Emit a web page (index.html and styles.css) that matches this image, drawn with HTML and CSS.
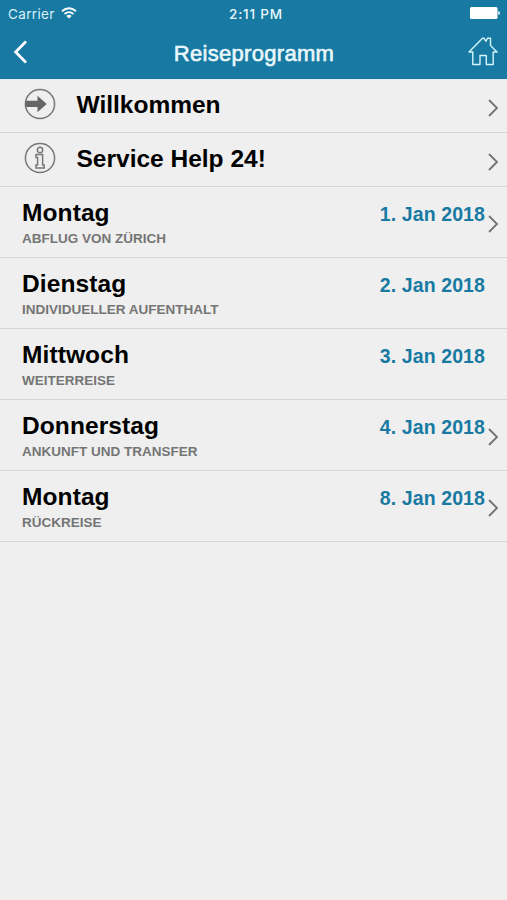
FILE: index.html
```
<!DOCTYPE html>
<html lang="de">
<head>
<meta charset="utf-8">
<title>Reiseprogramm</title>
<link rel="stylesheet" href="styles.css">
</head>
<body>
<header class="header">
  <div class="status">
    <div class="carrier"><span>Carrier</span>
      <svg class="wifi" width="16" height="12" viewBox="0 0 16 12" fill="none" stroke="currentColor" stroke-width="1.8"><path d="M1 4.2Q8-1.7 15 4.2M3.5 7Q8 3.2 12.5 7"/><path d="M8 11.5 5.3 8.9Q8 6.8 10.7 8.9Z" fill="currentColor" stroke="none"/></svg>
    </div>
    <span class="time">2:11 PM</span>
    <svg class="battery" width="30" height="12" viewBox="0 0 30 12" fill="currentColor"><rect width="27.5" height="12" rx="1.5"/><path d="M28.3 4q1.7 .5 1.7 2t-1.7 2z"/></svg>
  </div>
  <nav class="nav">
    <svg class="back" width="14" height="24" viewBox="0 0 14 24" fill="none" stroke="currentColor" stroke-width="2.7"><path d="M13 1.5 2.6 12 13 22.5"/></svg>
    <h1 class="title">Reiseprogramm</h1>
    <svg class="home" width="30" height="30" viewBox="0 0 30 30" fill="none" stroke="currentColor" stroke-width="1.4" stroke-linejoin="round"><path d="M1 16 14.5 2.2H16L18 5.3 19.5 2.2H22.5V9.5L29 16H25.2V28.5H18.3V19.5H12V28.5H4.8V16Z"/></svg>
  </nav>
</header>
<main class="list">
  <div class="row link">
    <svg class="icon" width="32" height="32" viewBox="0 0 32 32"><circle cx="16" cy="16" r="14.6" fill="none" stroke="#777" stroke-width="1.5"/><path d="M1.7 12.8H13.5V7.7L22.7 16 13.5 24.3V18.9H1.7Z" fill="#666"/></svg>
    <h2 class="name">Willkommen</h2>
    <svg class="chevron" width="11" height="18" viewBox="0 0 11 18"><path d="M1 1 9 9 1 17"/></svg>
  </div>
  <div class="row link">
    <svg class="icon" width="32" height="32" viewBox="0 0 32 32" fill="none" stroke="#777" stroke-width="1.5"><circle cx="16" cy="16" r="14.6"/><circle cx="16" cy="8" r="2.7"/><path d="M12 12.6H18.6V23H20.2V26H12V23H13.6V15.4H12Z"/></svg>
    <h2 class="name">Service Help 24!</h2>
    <svg class="chevron" width="11" height="18" viewBox="0 0 11 18"><path d="M1 1 9 9 1 17"/></svg>
  </div>
  <div class="row day"><div class="info"><h2 class="name">Montag</h2><p class="sub">ABFLUG VON ZÜRICH</p></div><time class="date">1. Jan 2018</time><svg class="chevron" width="11" height="18" viewBox="0 0 11 18"><path d="M1 1 9 9 1 17"/></svg></div>
  <div class="row day"><div class="info"><h2 class="name">Dienstag</h2><p class="sub">INDIVIDUELLER AUFENTHALT</p></div><time class="date">2. Jan 2018</time></div>
  <div class="row day"><div class="info"><h2 class="name">Mittwoch</h2><p class="sub">WEITERREISE</p></div><time class="date">3. Jan 2018</time></div>
  <div class="row day"><div class="info"><h2 class="name">Donnerstag</h2><p class="sub">ANKUNFT UND TRANSFER</p></div><time class="date">4. Jan 2018</time><svg class="chevron" width="11" height="18" viewBox="0 0 11 18"><path d="M1 1 9 9 1 17"/></svg></div>
  <div class="row day"><div class="info"><h2 class="name">Montag</h2><p class="sub">RÜCKREISE</p></div><time class="date">8. Jan 2018</time><svg class="chevron" width="11" height="18" viewBox="0 0 11 18"><path d="M1 1 9 9 1 17"/></svg></div>
</main>
</body>
</html>
```
FILE: styles.css
```
* { box-sizing: border-box; }
body { margin: 0; min-height: 900px; background: #efefef; color: #000; font-family: "Liberation Sans", Arial, sans-serif; }
h1, h2, p { margin: 0; }
svg { display: block; flex: none; }

.header { height: 79px; background: #187aa2; color: #fff; }
.status { display: grid; grid-template-columns: 1fr auto 1fr; align-items: center; height: 27px; padding: 0 7px 0 8px; font: 400 13.5px/27px Inter, sans-serif; }
.carrier { display: flex; gap: 6px; color: #d9f0f8; letter-spacing: .35px; }
.carrier span, .time { padding-top: 1px; line-height: 26px; }
.wifi { margin-top: 7px; color: #fff; }
.time { margin-left: 4px; font-weight: 500; font-size: 13.5px; letter-spacing: .8px; color: #e6f7fc; }
.battery { justify-self: end; margin-top: -1px; }
.nav { display: grid; grid-template-columns: 1fr auto 1fr; align-items: center; height: 52px; padding: 0 9px 0 13px; }
.back { margin-top: -2px; }
.title { margin: 1px 3px 0 0; font-size: 22px; line-height: 26px; font-weight: 400; letter-spacing: .3px; -webkit-text-stroke: .6px currentColor; color: #e9f8fc; }
.home { justify-self: end; margin-top: -4px; color: #d5f3fb; }

.list { border-top: 1px solid #e3eef4; }
.row { display: flex; border-bottom: 1px solid #d5d5d5; }
.name { font-size: 24.5px; line-height: 28px; font-weight: 700; letter-spacing: 0; }
.chevron { fill: none; stroke: #727272; stroke-width: 1.8; }
.link { height: 54px; padding: 10px 8px 0 24px; }
.link:first-child { height: 53px; padding-top: 9px; }
.link .name { flex: 1; margin: 2px 0 0 20.5px; }
.link .icon { margin-top: -1px; }
.link .chevron { margin-top: 10px; }
.day { height: 71px; padding: 12px 22px 0; }
.day .info { flex: 1; }
.day .name { letter-spacing: .1px; }
.sub { margin-top: 4px; font-size: 13.5px; line-height: 16px; font-weight: 700; letter-spacing: 0; color: #757575; }
.date { margin-top: 3px; font-size: 19.5px; line-height: 24px; font-weight: 700; letter-spacing: .1px; color: #187aa2; }
.day .chevron { margin: 16px -14px 0 3px; }
```
